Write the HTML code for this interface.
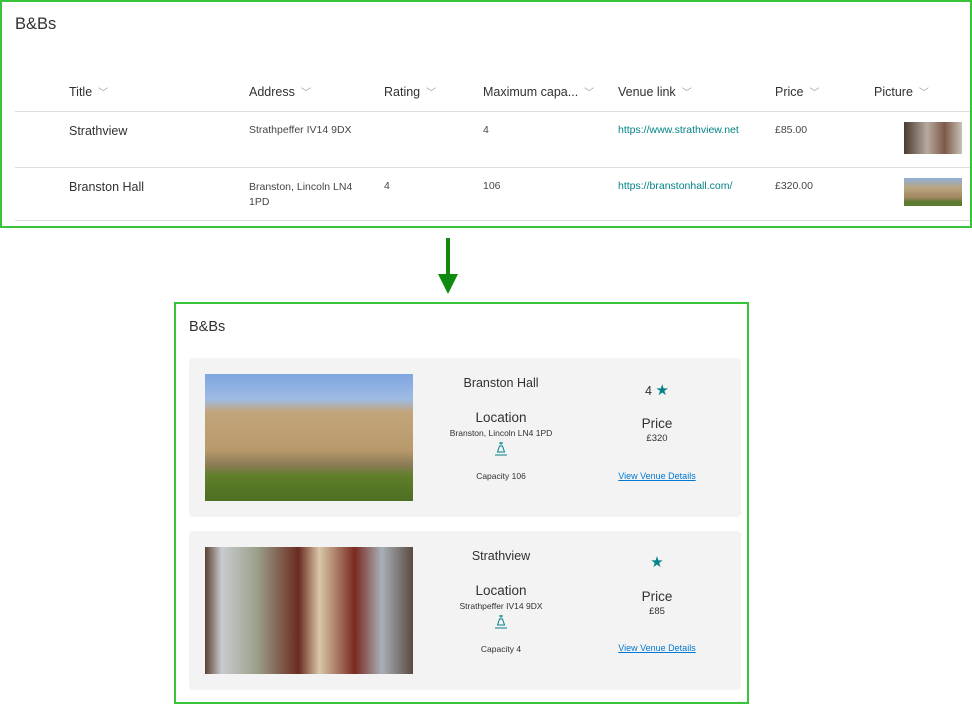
<!DOCTYPE html>
<html><head><meta charset="utf-8"><style>
body{margin:0;width:972px;height:725px;background:#fff;font-family:"Liberation Sans",sans-serif;color:#323130;position:relative;overflow:hidden}
.a{position:absolute}
.frame{position:absolute;border:2px solid #3ac43a;box-sizing:border-box}
.h{font-size:12.5px;color:#323130}
.h span{color:#a19f9d;font-size:10px;margin-left:6px}
.c{font-size:10.5px;color:#484644}
.lnk{font-size:10.5px;color:#038387}
.line{position:absolute;left:15px;right:2px;height:1px;background:#e1dfdd}
.card{position:absolute;left:189px;width:552px;height:159px;background:#f3f3f3;border-radius:4px}
.ctr{position:absolute;text-align:center;transform:translateX(-50%);white-space:nowrap}
.vd{font-size:9px;color:#0078d4;text-decoration:underline}
</style></head><body>
<div class="frame" style="left:0;top:0;width:972px;height:228px"></div>
<div class="a" style="left:15px;top:15px;font-size:16.5px;color:#323130">B&amp;Bs</div>
<div class="a h" style="left:69px;top:84px">Title<span>﹀</span></div>
<div class="a h" style="left:249px;top:84px">Address<span>﹀</span></div>
<div class="a h" style="left:384px;top:84px">Rating<span>﹀</span></div>
<div class="a h" style="left:483px;top:84px">Maximum capa...<span>﹀</span></div>
<div class="a h" style="left:618px;top:84px">Venue link<span>﹀</span></div>
<div class="a h" style="left:775px;top:84px">Price<span>﹀</span></div>
<div class="a h" style="left:874px;top:84px">Picture<span>﹀</span></div>
<div class="line" style="top:111px"></div>
<div class="a" style="left:69px;top:124px;font-size:12.5px">Strathview</div>
<div class="a c" style="left:249px;top:124px">Strathpeffer IV14 9DX</div>
<div class="a c" style="left:483px;top:124px">4</div>
<div class="a lnk" style="left:618px;top:124px">https://www.strathview.net</div>
<div class="a c" style="left:775px;top:124px">£85.00</div>
<div class="a" style="left:904px;top:122px;width:58px;height:32px;background:linear-gradient(90deg,#4a3a30,#b7aaa0 40%,#7d5a48 70%,#c9c0b8)"></div>
<div class="line" style="top:167px"></div>
<div class="a" style="left:69px;top:180px;font-size:12.5px">Branston Hall</div>
<div class="a c" style="left:249px;top:180px;line-height:15px">Branston, Lincoln LN4<br>1PD</div>
<div class="a c" style="left:384px;top:180px">4</div>
<div class="a c" style="left:483px;top:180px">106</div>
<div class="a lnk" style="left:618px;top:180px">https://branstonhall.com/</div>
<div class="a c" style="left:775px;top:180px">£320.00</div>
<div class="a" style="left:904px;top:178px;width:58px;height:28px;background:linear-gradient(180deg,#8fb0d8 0,#b9a57e 35%,#a08660 70%,#5c7a30 85%)"></div>
<div class="line" style="top:220px"></div>

<div class="a" style="left:446px;top:238px;width:4px;height:42px;background:#0f8a0f"></div>
<div class="a" style="left:438px;top:274px;width:0;height:0;border-left:10px solid transparent;border-right:10px solid transparent;border-top:20px solid #0f8a0f"></div>

<div class="frame" style="left:174px;top:302px;width:575px;height:402px"></div>
<div class="a" style="left:189px;top:319px;font-size:14.5px">B&amp;Bs</div>

<div class="card" style="top:358px"></div>
<div class="a" style="left:205px;top:374px;width:208px;height:127px;background:linear-gradient(180deg,#7ea6e0 0,#9fbbe3 20%,#c2a57a 30%,#b8996b 60%,#8a7a55 72%,#5f7f2a 80%,#4e6e22 100%)"></div>
<div class="ctr" style="left:501px;top:376px;font-size:12.5px">Branston Hall</div>
<div class="ctr" style="left:501px;top:410px;font-size:13.5px">Location</div>
<div class="ctr" style="left:501px;top:428px;font-size:8.5px">Branston, Lincoln LN4 1PD</div>
<svg class="a" style="left:494px;top:441px" width="14" height="15" viewBox="0 0 14 15" fill="none" stroke="#038387" stroke-width="1"><path d="M7 1v3M5 2h4M3.5 11L5.5 5h3l2 6M3 11h8M1 14h12"/></svg>
<div class="ctr" style="left:501px;top:471px;font-size:8.5px">Capacity 106</div>
<div class="ctr" style="left:657px;top:381px;font-size:12.5px">4 <span style="color:#038387;font-size:15px">★</span></div>
<div class="ctr" style="left:657px;top:416px;font-size:13.5px">Price</div>
<div class="ctr" style="left:657px;top:433px;font-size:9.5px">£320</div>
<div class="ctr vd" style="left:657px;top:471px">View Venue Details</div>

<div class="card" style="top:531px"></div>
<div class="a" style="left:205px;top:547px;width:208px;height:127px;background:linear-gradient(90deg,#5a4030 0,#c8ccd0 8%,#9aa08a 25%,#6b2a20 45%,#d8c8a8 55%,#7a2a20 72%,#a8b0b8 85%,#5a4a40 100%)"></div>
<div class="ctr" style="left:501px;top:549px;font-size:12.5px">Strathview</div>
<div class="ctr" style="left:501px;top:583px;font-size:13.5px">Location</div>
<div class="ctr" style="left:501px;top:601px;font-size:8.5px">Strathpeffer IV14 9DX</div>
<svg class="a" style="left:494px;top:614px" width="14" height="15" viewBox="0 0 14 15" fill="none" stroke="#038387" stroke-width="1"><path d="M7 1v3M5 2h4M3.5 11L5.5 5h3l2 6M3 11h8M1 14h12"/></svg>
<div class="ctr" style="left:501px;top:644px;font-size:8.5px">Capacity 4</div>
<div class="ctr" style="left:657px;top:553px;font-size:15px;color:#038387">★</div>
<div class="ctr" style="left:657px;top:589px;font-size:13.5px">Price</div>
<div class="ctr" style="left:657px;top:606px;font-size:9.5px">£85</div>
<div class="ctr vd" style="left:657px;top:643px">View Venue Details</div>
</body></html>
